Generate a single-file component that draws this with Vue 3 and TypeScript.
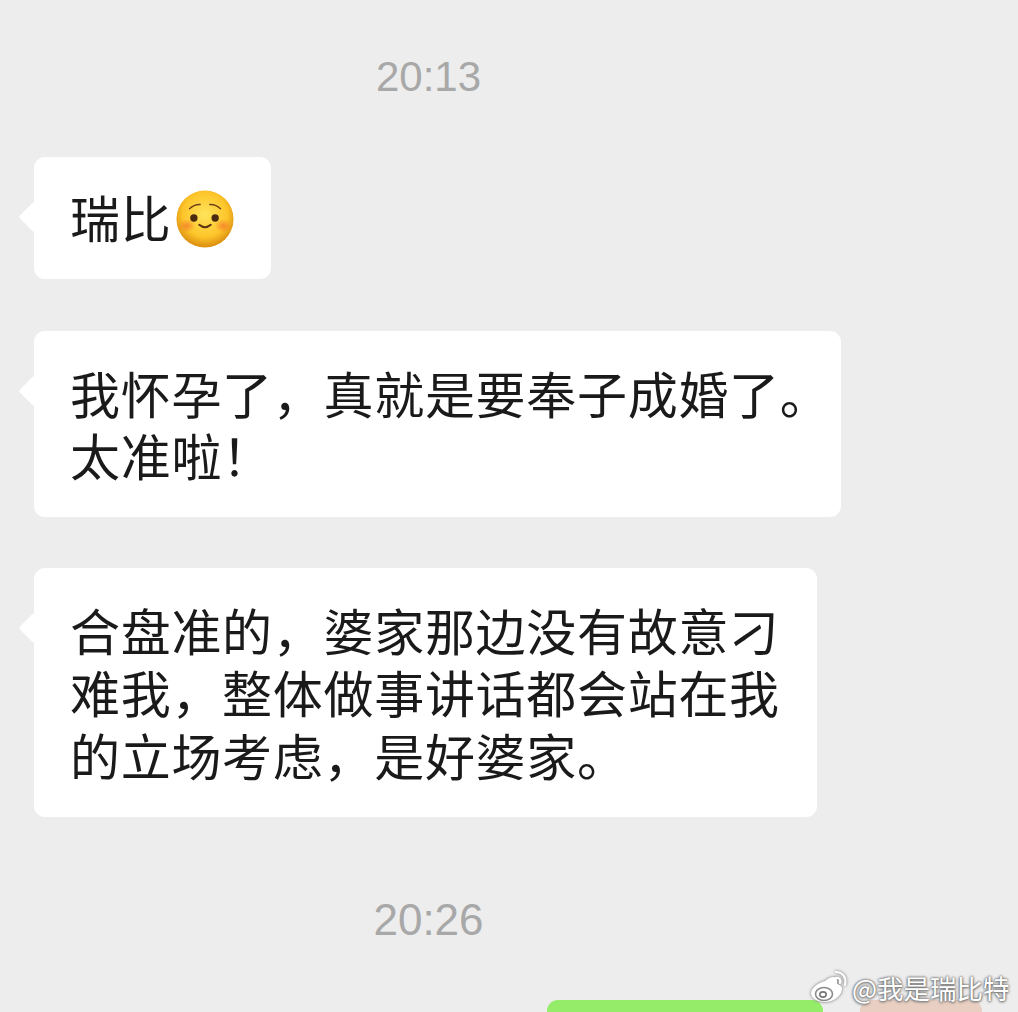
<script setup lang="ts">
const bubbles: { cls: string; lines: string[]; emoji?: boolean }[] = [
  { cls: 'b1', lines: ['瑞比'], emoji: true },
  { cls: 'b2', lines: ['我怀孕了，真就是要奉子成婚了。', '太准啦！'] },
  { cls: 'b3', lines: ['合盘准的，婆家那边没有故意刁', '难我，整体做事讲话都会站在我', '的立场考虑，是好婆家。'] },
]
</script>

<template>
  <div class="page">
    <div class="time first">20:13</div>
    <div v-for="b in bubbles" :key="b.cls" class="bubble" :class="b.cls">
      <div v-for="l in b.lines" :key="l" class="line">
        {{ l }}<svg v-if="b.emoji" class="emoji" viewBox="0 0 60 60" aria-hidden="true">
          <defs>
            <radialGradient id="face" cx="50%" cy="42%" r="56%">
              <stop offset="0%" stop-color="#ffe45c" />
              <stop offset="70%" stop-color="#fdc52a" />
              <stop offset="100%" stop-color="#dd9212" />
            </radialGradient>
            <radialGradient id="blush">
              <stop offset="0%" stop-color="#f4702e" stop-opacity=".7" />
              <stop offset="100%" stop-color="#f4702e" stop-opacity="0" />
            </radialGradient>
          </defs>
          <circle cx="30" cy="30" r="29.5" fill="url(#face)" />
          <ellipse cx="11" cy="37" rx="9" ry="7" fill="url(#blush)" />
          <ellipse cx="49" cy="37" rx="9" ry="7" fill="url(#blush)" />
          <circle cx="18.5" cy="29" r="3.8" fill="#4a2a10" />
          <circle cx="40.5" cy="29" r="3.8" fill="#4a2a10" />
          <path d="M14 19.5q5-5 11-4.5M46 19.5q-5-5-11-4.5" fill="none" stroke="#6e4212" stroke-width="1.5" stroke-linecap="round" />
          <path d="M24 36q6 5 12 0" fill="none" stroke="#5a3210" stroke-width="2" stroke-linecap="round" />
        </svg>
      </div>
    </div>
    <div class="time second">20:26</div>
    <div class="bottom">
      <div class="green"></div>
      <div class="avatar"></div>
    </div>
    <div class="mark">
      <svg class="weibo" viewBox="0 0 38 36" aria-hidden="true">
        <path d="M15 11c7-6 13-5 12 2 0 2 4 1 5 5 1 6-7 14-17 14C7 32 1 28 1 23c0-4 6-10 14-12z" fill="#fff" />
        <ellipse cx="14" cy="24" rx="8.5" ry="6.5" fill="none" stroke="#8a8a8a" stroke-width="1.6" />
        <ellipse cx="13" cy="24.5" rx="3.2" ry="2.6" fill="none" stroke="#777" stroke-width="1.6" />
        <path d="M26 2c6 0 11 5 9 13M26 8c3-1 5 2 4 5" fill="none" stroke="#fff" stroke-width="2.2" stroke-linecap="round" />
      </svg>
      <span>@我是瑞比特</span>
    </div>
  </div>
</template>

<style>
html, body { margin: 0; background: #ededed; }
</style>

<style scoped>
.page {
  position: relative;
  width: 1018px;
  height: 1012px;
  overflow: hidden;
  background: #ededed;
  font-family: "Noto Sans CJK SC", "Noto Sans", sans-serif;
  color: #1a1a1a;
}
.time {
  width: 857px;
  text-align: center;
  font-family: "Liberation Sans", Roboto, sans-serif;
  font-size: 42px;
  line-height: 44px;
  color: #a8a8a8;
}
.first { padding-top: 55px; }
.second { margin-top: 81px; font-size: 44px; }
.bubble {
  position: relative;
  box-sizing: border-box;
  margin-left: 34px;
  background: #fff;
  border-radius: 11px;
  padding: 30px 0 30px 36px;
  font-size: 50px;
  letter-spacing: 0.7px;
  line-height: 62.3px;
}
.bubble::before {
  content: "";
  position: absolute;
  left: -11px;
  top: 49px;
  width: 22px;
  height: 22px;
  background: #fff;
  border-radius: 3px;
  transform: rotate(45deg);
}
.line { position: relative; white-space: nowrap; height: 62.3px; display: flex; align-items: center; }
.b1 { width: 237px; height: 122px; margin-top: 58px; padding-top: 28px; }
.b2 { width: 807px; height: 186px; margin-top: 52px; }
.b3 { width: 783px; height: 249px; margin-top: 51px; }
.emoji { width: 58px; height: 58px; margin-left: 5px; flex: none; position: relative; top: 3px; }
.bottom { position: relative; margin-top: 58px; display: flex; }
.green {
  margin-left: 547px;
  width: 276px;
  height: 60px;
  background: #95ec69;
  border-radius: 11px;
}
.avatar {
  margin-left: 37px;
  width: 122px;
  height: 60px;
  background: #e8cfc2;
  border-radius: 11px;
}
.mark {
  position: absolute;
  left: 810px;
  top: 970px;
  display: flex;
  align-items: center;
  gap: 4px;
  color: #fff;
  font-size: 26.5px;
  line-height: 36px;
  text-shadow: 0 0 2px #666, 0 0 3px #777, 0 1px 3px #888;
}
.weibo { width: 38px; height: 36px; flex: none; filter: drop-shadow(0 0 1.5px #666); }
</style>
